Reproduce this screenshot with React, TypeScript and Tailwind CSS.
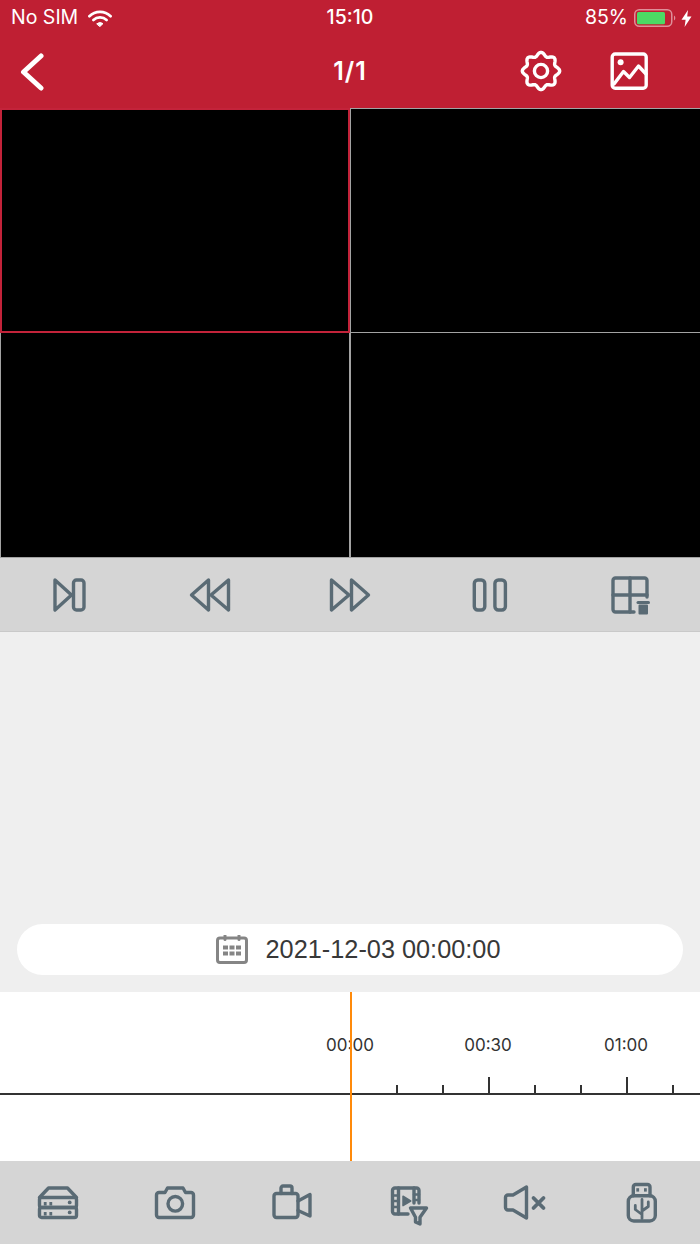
import type { ReactNode } from 'react';

const gearPath = (() => {
  const pts: string[] = [];
  for (let i = 0; i < 96; i++) {
    const a = (i / 96) * Math.PI * 2;
    const r = 16.8 + 1.9 * Math.cos(8 * a);
    const x = 22 + r * Math.sin(a);
    const y = 22 - r * Math.cos(a);
    pts.push(`${i === 0 ? 'M' : 'L'}${x.toFixed(2)} ${y.toFixed(2)}`);
  }
  return pts.join(' ') + ' Z';
})();

function Icon({ size = 40, children }: { size?: number; children: ReactNode }) {
  return (
    <svg
      width={size}
      height={size}
      viewBox={`0 0 ${size} ${size}`}
      fill="none"
      stroke="#5a6b75"
      strokeWidth="3.4"
      strokeLinejoin="round"
      strokeLinecap="round"
      className="overflow-visible"
    >
      {children}
    </svg>
  );
}

const toolbarIcons = [
  <Icon key="step">
    <path d="M5 5 L21.5 20 L5 35 Z" />
    <rect x="23.5" y="5" width="10.5" height="30" rx="3" />
  </Icon>,
  <Icon key="rewind">
    <path d="M18.5 5 L1.5 20 L18.5 35 Z" />
    <path d="M38.5 5 L21 20 L38.5 35 Z" />
  </Icon>,
  <Icon key="forward">
    <path d="M21.5 5 L38.5 20 L21.5 35 Z" />
    <path d="M1.5 5 L19 20 L1.5 35 Z" />
  </Icon>,
  <Icon key="pause">
    <rect x="4.3" y="5" width="10.5" height="30" rx="3.5" />
    <rect x="24.9" y="5" width="10.5" height="30" rx="3.5" />
  </Icon>,
  <Icon key="grid">
    <path d="M24 37 H5.5 a2.5 2.5 0 0 1 -2.5 -2.5 V5.5 a2.5 2.5 0 0 1 2.5 -2.5 H34.5 a2.5 2.5 0 0 1 2.5 2.5 V22" />
    <path d="M20 3 V37 M3 20 H37" />
    <path d="M28 27.5 H38.5" strokeWidth="3" />
    <path d="M29.5 30.5 H37 V38.5 H29.5 Z" fill="#5a6b75" strokeWidth="2" />
  </Icon>,
];

const bottomIcons = [
  <Icon key="hdd" size={44}>
    <path d="M3.5 16.5 L12.5 7 H31.5 L40.5 16.5" />
    <rect x="3.5" y="16.5" width="37" height="10" rx="2" />
    <rect x="3.5" y="26.5" width="37" height="10" rx="2" />
    <g fill="#5a6b75" stroke="none">
      <circle cx="33.7" cy="21.4" r="1.9" />
      <circle cx="33.7" cy="31.4" r="1.9" />
      <rect x="7.8" y="21" width="2.8" height="3.5" />
      <rect x="13.4" y="21" width="2.8" height="3.5" />
      <rect x="7.8" y="31" width="2.8" height="3.5" />
      <rect x="13.4" y="31" width="2.8" height="3.5" />
    </g>
  </Icon>,
  <Icon key="camera" size={44}>
    <path d="M6 11.5 H12 L14.5 7 H30 L32.5 11.5 H38 a2.5 2.5 0 0 1 2.5 2.5 V34 a2.5 2.5 0 0 1 -2.5 2.5 H6 a2.5 2.5 0 0 1 -2.5 -2.5 V14 a2.5 2.5 0 0 1 2.5 -2.5 Z" />
    <circle cx="22.3" cy="22.8" r="7.3" />
  </Icon>,
  <Icon key="video" size={44}>
    <path d="M6.5 12.5 H25.5 a2.5 2.5 0 0 1 2.5 2.5 V34 a2.5 2.5 0 0 1 -2.5 2.5 H6.5 a2.5 2.5 0 0 1 -2.5 -2.5 V15 a2.5 2.5 0 0 1 2.5 -2.5 Z" />
    <path d="M11 12.5 V7 a2 2 0 0 1 2 -2 H20 a2 2 0 0 1 2 2 V12.5" />
    <path d="M28 20 L40 13.5 V35 L28 29.5" />
  </Icon>,
  <Icon key="film" size={44}>
    <path d="M22 33 H9 a2.5 2.5 0 0 1 -2.5 -2.5 V9.5 a2.5 2.5 0 0 1 2.5 -2.5 H30.5 a2.5 2.5 0 0 1 2.5 2.5 V22" />
    <path d="M12.5 7 V33 M28 7 V22" />
    <path d="M6.5 14.5 H12.5 M6.5 20 H12.5 M6.5 26 H12.5 M28 13.5 H33 M28 19 H33" strokeWidth="2.5" />
    <path d="M17 15.2 L24.7 20 L17 24.6 Z" fill="#5a6b75" strokeWidth="1.5" />
    <path d="M24.5 27 H40.5 L34 36.2 V43 L29.5 41 V36.2 Z" />
  </Icon>,
  <Icon key="mute" size={44}>
    <path d="M23.5 6 V37 L10 29 H5 a2.5 2.5 0 0 1 -2.5 -2.5 V16.5 a2.5 2.5 0 0 1 2.5 -2.5 H10 Z" />
    <path d="M30.5 17 L40.5 27 M40.5 17 L30.5 27" strokeWidth="3.8" />
  </Icon>,
  <Icon key="usb" size={44}>
    <rect x="8.3" y="14.8" width="27" height="25.2" rx="5.5" />
    <path d="M13.3 14.8 V6 a2.5 2.5 0 0 1 2.5 -2.5 H27.5 a2.5 2.5 0 0 1 2.5 2.5 V14.8" />
    <g fill="#5a6b75" stroke="none">
      <rect x="16.3" y="7.2" width="2.8" height="3.4" />
      <rect x="24" y="7.2" width="2.8" height="3.4" />
    </g>
    <path d="M22 18.5 V37.5 M15.3 24.5 V28.5 L22 33.5 M28.3 21 V25.5 L22 30" strokeWidth="2.8" />
  </Icon>,
];

function StatusBar() {
  return (
    <div className="grid h-[36px] grid-cols-3 items-center font-['Inter',sans-serif] text-[19.5px] text-white">
      <div className="flex items-center gap-[10px] pl-[11px]">
        <span>No SIM</span>
        <svg width="24" height="17" viewBox="0 0 24 17" fill="none" stroke="white" strokeWidth="2.7" strokeLinecap="round">
          <path d="M1.4 6.2 A15 15 0 0 1 22.6 6.2" />
          <path d="M5.4 10 A9.5 9.5 0 0 1 18.6 10" />
          <path d="M9 13.6 Q12 11.3 15 13.6 L12 16.4 Z" fill="white" strokeWidth="1" strokeLinejoin="round" />
        </svg>
      </div>
      <div className="text-center font-medium">15:10</div>
      <div className="flex items-center justify-end gap-[6px] pr-[8px]">
        <span>85%</span>
        <svg width="47" height="18" viewBox="0 0 47 18" fill="none">
          <rect x="0.75" y="0.75" width="37" height="16.5" rx="4.5" stroke="white" strokeOpacity="0.5" strokeWidth="1.5" />
          <rect x="3" y="3" width="28" height="12.2" rx="1.5" fill="#4cd964" />
          <path d="M40 6.5 a3 3 0 0 1 0 5 Z" fill="white" fillOpacity="0.5" />
        </svg>
        <svg width="11" height="17" viewBox="0 0 11 17" className="-ml-[6px]" fill="white">
          <path d="M7 0 L0.5 9.8 H4.6 L3.6 17 L10.5 6.6 H6.2 Z" />
        </svg>
      </div>
    </div>
  );
}

function NavBar() {
  return (
    <div className="relative flex h-[72px] items-center justify-end pr-[51px]">
      <button className="absolute left-[20px] top-[17px]">
        <svg width="26" height="38" viewBox="0 0 26 38" fill="none" stroke="white" strokeWidth="5" strokeLinecap="round" strokeLinejoin="round">
          <path d="M21 3 L3.5 19 L21 35" />
        </svg>
      </button>
      <span className="absolute inset-x-0 text-center font-['Inter',sans-serif] text-[25px] font-semibold tracking-[1px] text-white">1/1</span>
      <div className="mb-[2px] flex items-center gap-[46px]">
        <svg width="44" height="44" viewBox="0 0 44 44" fill="none" stroke="white" strokeWidth="3.4">
          <path d={gearPath} strokeLinejoin="round" />
          <circle cx="22" cy="22" r="6.6" />
        </svg>
        <svg width="40" height="40" viewBox="0 0 40 40" fill="none" stroke="white" strokeWidth="3.4" strokeLinejoin="round" strokeLinecap="round">
          <rect x="3.2" y="3" width="34" height="34.3" rx="3" />
          <circle cx="11.6" cy="11.2" r="3" fill="white" stroke="none" />
          <path d="M5 33 L14.5 20.5 L20.5 26.5 L29.5 15 L37 23" />
        </svg>
      </div>
    </div>
  );
}

function VideoGrid() {
  return (
    <div className="grid h-[450px] grid-cols-2 grid-rows-2 border-b border-[#a3a3a3] bg-black">
      <div className="border-2 border-[#c3233a] bg-black" />
      <div className="border border-[#a3a3a3] border-r-0 bg-black" />
      <div className="border-x border-[#a3a3a3] bg-black" />
      <div className="border-l border-[#a3a3a3] bg-black" />
    </div>
  );
}

function DatePill() {
  return (
    <div className="flex h-[51px] items-center justify-center gap-[18px] rounded-full bg-white pl-[16px]">
      <svg width="32" height="29" viewBox="0 0 32 29" fill="none" stroke="#858585" strokeWidth="3" strokeLinecap="round">
        <rect x="1.5" y="3" width="29" height="24.5" rx="2.5" />
        <path d="M9 0.8 V4.5 M23 0.8 V4.5" />
        <g fill="#858585" stroke="none">
          <rect x="7" y="10.5" width="5" height="4" />
          <rect x="13.5" y="10.5" width="5" height="4" />
          <rect x="20" y="10.5" width="5" height="4" />
          <rect x="7" y="16.5" width="5" height="4" />
          <rect x="13.5" y="16.5" width="5" height="4" />
          <rect x="20" y="16.5" width="5" height="4" />
        </g>
      </svg>
      <span className="font-['Liberation_Sans',sans-serif] text-[25.3px] text-[#383838]">2021-12-03 00:00:00</span>
    </div>
  );
}

const ticks = [0, 1, 2, 3, 4, 5, 6];
const labels = [
  { text: '00:00', x: 350 },
  { text: '00:30', x: 488 },
  { text: '01:00', x: 626 },
];

function Timeline() {
  return (
    <div className="relative h-[169px] bg-white">
      {labels.map((l) => (
        <span
          key={l.text}
          className="absolute top-[44px] w-[60px] -translate-x-1/2 text-center font-['Inter',sans-serif] text-[17px] leading-[19px] text-[#333333]"
          style={{ left: l.x }}
        >
          {l.text}
        </span>
      ))}
      <svg width="700" height="169" viewBox="0 0 700 169" className="absolute inset-0">
        <rect x="0" y="101" width="700" height="2" fill="#333333" />
        {ticks.map((i) => {
          const long = i === 2 || i === 5;
          return <rect key={i} x={396 + i * 46} y={long ? 85 : 93} width="2" height={long ? 17 : 9} fill="#333333" />;
        })}
        <rect x="350" y="0" width="2" height="169" fill="#ff8a0a" />
      </svg>
    </div>
  );
}

export default function App() {
  return (
    <div className="flex h-[1244px] w-[700px] flex-col overflow-hidden bg-[#efefef]">
      <div className="bg-[#bf1f33]">
        <StatusBar />
        <NavBar />
      </div>
      <VideoGrid />
      <div className="flex h-[74px] items-center border-b border-[#c9c9c9] bg-[#d5d5d5]">
        {toolbarIcons.map((icon, i) => (
          <div key={i} className="flex flex-1 justify-center">
            {icon}
          </div>
        ))}
      </div>
      <div className="flex flex-1 flex-col justify-end px-[17px] pb-[17px]">
        <DatePill />
      </div>
      <Timeline />
      <div className="flex h-[83px] items-center bg-[#d5d5d5]">
        {bottomIcons.map((icon, i) => (
          <div key={i} className="flex flex-1 justify-center">
            {icon}
          </div>
        ))}
      </div>
    </div>
  );
}
